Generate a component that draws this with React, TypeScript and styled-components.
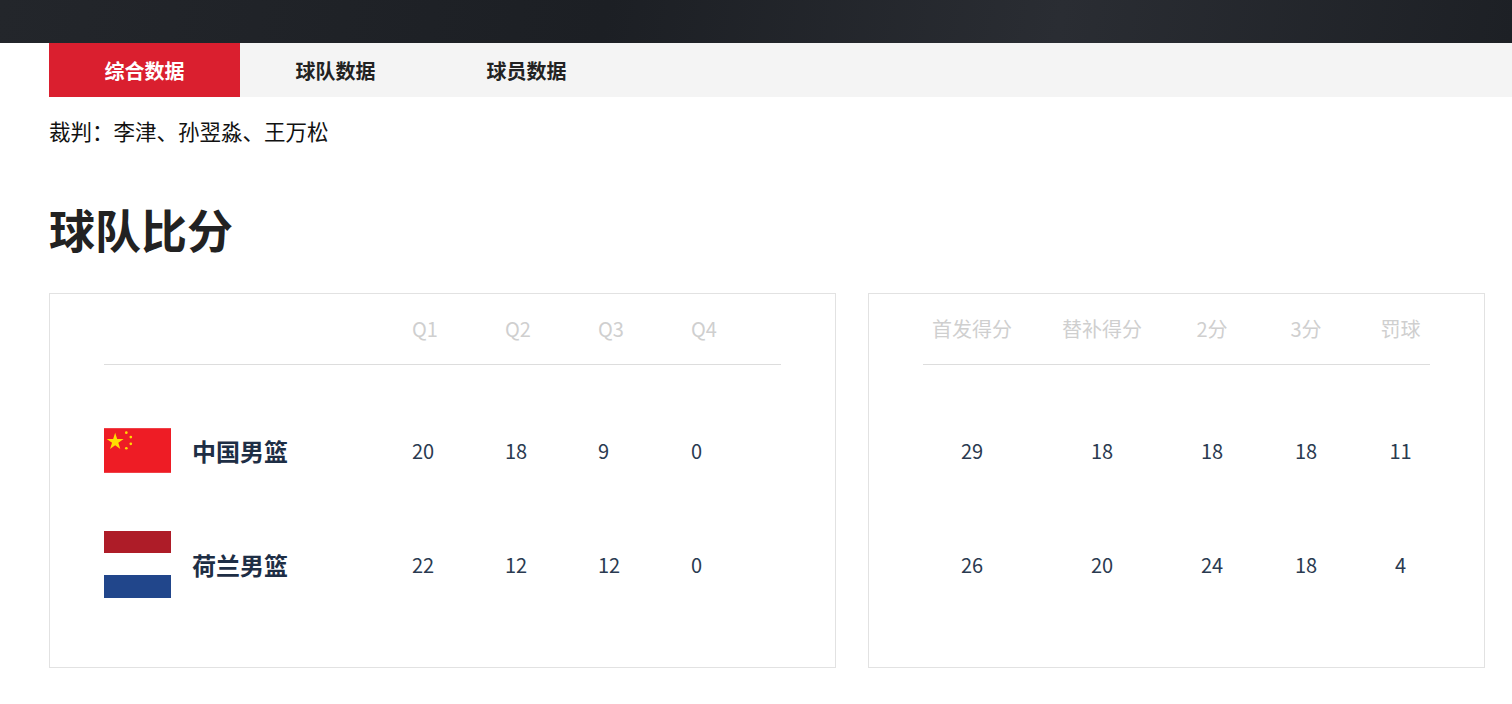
import React from 'react';
import styled, { createGlobalStyle } from 'styled-components';

const Global = createGlobalStyle`
  body { margin: 0; background: #fff; font-family: "Noto Sans CJK SC", "Noto Sans", sans-serif; }
`;

const teams = [
  { name: '中国男篮', flag: 'cn', q: [20, 18, 9, 0], s: [29, 18, 18, 18, 11] },
  { name: '荷兰男篮', flag: 'nl', q: [22, 12, 12, 0], s: [26, 20, 24, 18, 4] },
];

const ChinaFlag = () => (
  <svg width="67" height="45" viewBox="0 0 30 20">
    <rect width="30" height="20" fill="#ee1c25" />
    <polygon fill="#ffde00" points="5,2 5.9,4.8 8.8,4.8 6.4,6.5 7.3,9.3 5,7.6 2.7,9.3 3.6,6.5 1.2,4.8 4.1,4.8" />
    <circle cx="10" cy="2" r="0.6" fill="#ffde00" />
    <circle cx="12" cy="4" r="0.6" fill="#ffde00" />
    <circle cx="12" cy="7" r="0.6" fill="#ffde00" />
    <circle cx="10" cy="9" r="0.6" fill="#ffde00" />
  </svg>
);

const NlFlag = () => (
  <svg width="67" height="67" viewBox="0 0 67 67">
    <rect width="67" height="22" fill="#ae1c28" />
    <rect y="22" width="67" height="22" fill="#fff" />
    <rect y="44" width="67" height="23" fill="#21468b" />
  </svg>
);

export default function App() {
  return (
    <>
      <Global />
      <Banner />
      <TabBar>
        <Tab $active>综合数据</Tab>
        <Tab>球队数据</Tab>
        <Tab>球员数据</Tab>
      </TabBar>
      <Main>
        <Referee>裁判：李津、孙翌淼、王万松</Referee>
        <Title>球队比分</Title>
        <Cards>
          <Card $w={677}>
            <QGrid>
              <Head />
              {['Q1', 'Q2', 'Q3', 'Q4'].map((h) => <Head key={h}>{h}</Head>)}
            </QGrid>
            <Body>
              {teams.map((t) => (
                <QGrid key={t.name} as="div">
                  <TeamCell>
                    <FlagBox>{t.flag === 'cn' ? <ChinaFlag /> : <NlFlag />}</FlagBox>
                    <TeamName>{t.name}</TeamName>
                  </TeamCell>
                  {t.q.map((v, i) => <Val key={i}>{v}</Val>)}
                </QGrid>
              ))}
            </Body>
          </Card>
          <Card $w={507}>
            <SGrid>
              {['首发得分', '替补得分', '2分', '3分', '罚球'].map((h) => <Head key={h} $center>{h}</Head>)}
            </SGrid>
            <Body>
              {teams.map((t) => (
                <SGrid key={t.name} as="div">
                  {t.s.map((v, i) => <Val key={i} $center>{v}</Val>)}
                </SGrid>
              ))}
            </Body>
          </Card>
        </Cards>
      </Main>
    </>
  );
}

const Banner = styled.div`
  height: 43px;
  background: linear-gradient(100deg, #23262b 0%, #1c1f24 40%, #2a2d33 70%, #1d2025 100%);
`;

const TabBar = styled.div`
  display: flex;
  height: 54px;
  margin-left: 49px;
  background: #f4f4f4;
`;

const Tab = styled.div<{ $active?: boolean }>`
  width: 191px;
  display: flex;
  align-items: center;
  justify-content: center;
  font-size: 20px;
  font-weight: 700;
  color: ${(p) => (p.$active ? '#fff' : '#222')};
  background: ${(p) => (p.$active ? '#da1f2f' : 'transparent')};
`;

const Main = styled.div`
  padding: 0 26px 0 49px;
`;

const Referee = styled.div`
  margin-top: 19px;
  font-size: 21.5px;
  line-height: 30px;
  color: #111;
`;

const Title = styled.h2`
  margin: 52px 0 0;
  font-size: 46px;
  line-height: 60px;
  font-weight: 700;
  color: #222;
`;

const Cards = styled.div`
  display: flex;
  gap: 32px;
  margin-top: 35px;
`;

const Card = styled.div<{ $w: number }>`
  flex: 0 0 auto;
  border: 1px solid #e2e2e2;
  padding: 20px 54px 46px;
  width: ${(p) => p.$w}px;
`;

const QGrid = styled.div`
  display: grid;
  grid-template-columns: 308px 93px 93px 93px 1fr;
  align-items: center;
`;

const SGrid = styled.div`
  display: grid;
  grid-template-columns: 98px 162px 58px 130px 59px;
  align-items: center;
`;

const Head = styled.div<{ $center?: boolean }>`
  height: 50px;
  line-height: 30px;
  font-size: 20px;
  color: #cfcfcf;
  text-align: ${(p) => (p.$center ? 'center' : 'left')};
  border-bottom: 1px solid #ddd;
`;

const Body = styled.div`
  padding-top: 28px;
  & > div { height: 114px; }
`;

const TeamCell = styled.div`
  display: flex;
  align-items: center;
  gap: 21px;
`;

const FlagBox = styled.div`
  width: 67px;
  display: flex;
  align-items: center;
  svg { display: block; }
`;

const TeamName = styled.div`
  font-size: 24px;
  font-weight: 700;
  color: #1e2e45;
`;

const Val = styled.div<{ $center?: boolean }>`
  font-size: 20px;
  color: #2a3a50;
  text-align: ${(p) => (p.$center ? 'center' : 'left')};
`;
